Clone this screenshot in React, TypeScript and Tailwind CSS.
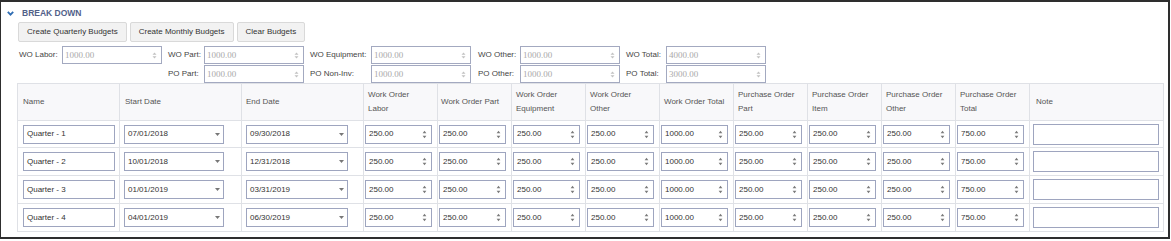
import React from "react";

const FilterSpin = () => (
  <svg width="5" height="7" viewBox="0 0 5 7" className="shrink-0">
    <path d="M0.5 2.8 L2.5 0.6 L4.5 2.8 Z" fill="#c2c2c2" />
    <path d="M0.5 4.2 L2.5 6.4 L4.5 4.2 Z" fill="#c2c2c2" />
  </svg>
);

const Spin = () => (
  <svg width="5" height="9" viewBox="0 0 5 9" className="shrink-0">
    <path d="M0.6 3.2 L2.5 0.8 L4.4 3.2 Z" fill="#7a7a7a" />
    <path d="M0.6 5.8 L2.5 8.2 L4.4 5.8 Z" fill="#7a7a7a" />
  </svg>
);

const Caret = () => (
  <svg width="5" height="3" viewBox="0 0 5 3" className="shrink-0">
    <path d="M0 0 L5 0 L2.5 3 Z" fill="#777" />
  </svg>
);

function FilterInput({ value }: { value: string }) {
  return (
    <div className="w-[100px] h-[18px] border border-[#a3a9c0] bg-white flex items-center pl-[2px] pr-[4px]">
      <span className="flex-1 text-[9px] text-[#a9a9a9] font-['Liberation_Serif',serif] leading-none">{value}</span>
      <FilterSpin />
    </div>
  );
}

function Label({ children, pl }: { children: React.ReactNode; pl: string }) {
  return <div className={`text-left ${pl} text-[8px] text-[#444] leading-[18px] whitespace-nowrap`}>{children}</div>;
}

function TextBox({ w, value, ml }: { w: string; value: string; ml: string }) {
  return (
    <div className={`${w} ${ml} h-[19px] border border-[#9ea5bf] bg-white flex items-center pl-[3px] text-[8px] text-[#333]`}>
      {value}
    </div>
  );
}

function DateBox({ value, w }: { value: string; w: string }) {
  return (
    <div className={`${w} ml-[4px] h-[19px] border border-[#9ea5bf] bg-white flex items-center pl-[3px] pr-[3px] text-[8px] text-[#333]`}>
      <span className="flex-1">{value}</span>
      <Caret />
    </div>
  );
}

function NumBox({ value }: { value: string }) {
  return (
    <div className="w-[67px] ml-[1px] h-[19px] border border-[#9ea5bf] bg-white flex items-center pl-[3px] pr-[4px] text-[8px] text-[#333]">
      <span className="flex-1">{value}</span>
      <Spin />
    </div>
  );
}

const headers: { t: React.ReactNode; pl: string }[] = [
  { t: "Name", pl: "pl-[5px]" },
  { t: "Start Date", pl: "pl-[5px]" },
  { t: "End Date", pl: "pl-[4px]" },
  { t: <>Work Order<br />Labor</>, pl: "pl-[4px]" },
  { t: "Work Order Part", pl: "pl-[3px]" },
  { t: <>Work Order<br />Equipment</>, pl: "pl-[4px]" },
  { t: <>Work Order<br />Other</>, pl: "pl-[4px]" },
  { t: "Work Order Total", pl: "pl-[4px]" },
  { t: <>Purchase Order<br />Part</>, pl: "pl-[4px]" },
  { t: <>Purchase Order<br />Item</>, pl: "pl-[4px]" },
  { t: <>Purchase Order<br />Other</>, pl: "pl-[4px]" },
  { t: <>Purchase Order<br />Total</>, pl: "pl-[4px]" },
  { t: "Note", pl: "pl-[6px]" },
];

const rows = [
  { name: "Quarter - 1", s: "07/01/2018", e: "09/30/2018", h: "h-[27px]" },
  { name: "Quarter - 2", s: "10/01/2018", e: "12/31/2018", h: "h-[28px]" },
  { name: "Quarter - 3", s: "01/01/2019", e: "03/31/2019", h: "h-[28px]" },
  { name: "Quarter - 4", s: "04/01/2019", e: "06/30/2019", h: "h-[28px]" },
];

export default function App() {
  return (
    <div className="w-[1171px] h-[241px] bg-white font-['Liberation_Sans',Arial,sans-serif]">
      <div className="w-[1170px] h-[239px] border-t-2 border-l border-r-2 border-b-2 border-[#2e2e2e] flex flex-col">
        <div className="h-[20px] pt-[3px] flex items-center">
          <svg width="7" height="5" viewBox="0 0 7 5" className="ml-[6px]">
            <path d="M0.8 0.8 L3.5 3.6 L6.2 0.8" stroke="#2f6db3" strokeWidth="1.8" fill="none" />
          </svg>
          <span className="ml-[8px] text-[8.5px] font-bold text-[#526189]">BREAK DOWN</span>
        </div>
        <div className="flex gap-[3px] ml-[17px] h-[20px]">
          {["Create Quarterly Budgets", "Create Monthly Budgets", "Clear Budgets"].map((b) => (
            <div key={b} className="h-[20px] px-[8px] flex items-center bg-[#f2f2f2] border border-[#d9d9d9] rounded-[2px] text-[8px] text-[#333]">
              {b}
            </div>
          ))}
        </div>
        <div className="mt-[4px] grid grid-cols-[61px_100px_42px_100px_67px_100px_49px_100px_46px_100px] gap-y-[1px]">
          <Label pl="pl-[18px]">WO Labor:</Label>
          <FilterInput value="1000.00" />
          <Label pl="pl-[6px]">WO Part:</Label>
          <FilterInput value="1000.00" />
          <Label pl="pl-[6px]">WO Equipment:</Label>
          <FilterInput value="1000.00" />
          <Label pl="pl-[7px]">WO Other:</Label>
          <FilterInput value="1000.00" />
          <Label pl="pl-[6px]">WO Total:</Label>
          <FilterInput value="4000.00" />
          <div />
          <div />
          <Label pl="pl-[6px]">PO Part:</Label>
          <FilterInput value="1000.00" />
          <Label pl="pl-[6px]">PO Non-Inv:</Label>
          <FilterInput value="1000.00" />
          <Label pl="pl-[7px]">PO Other:</Label>
          <FilterInput value="1000.00" />
          <Label pl="pl-[6px]">PO Total:</Label>
          <FilterInput value="3000.00" />
        </div>
        <table className="ml-[16px] w-[1146px] table-fixed border-collapse">
          <colgroup>
            <col className="w-[102px]" />
            <col className="w-[122px]" />
            <col className="w-[122px]" />
            {Array.from({ length: 9 }).map((_, i) => (
              <col key={i} className="w-[74px]" />
            ))}
            <col className="w-[134px]" />
          </colgroup>
          <thead>
            <tr className="h-[37px] bg-[#f8f8fa]">
              {headers.map((h, i) => (
                <th key={i} className={`border border-[#dfe1e6] ${h.pl} p-0 text-left align-middle font-normal text-[8px] leading-[14px] text-[#555]`}>
                  {h.t}
                </th>
              ))}
            </tr>
          </thead>
          <tbody>
            {rows.map((r) => (
              <tr key={r.name} className={r.h}>
                <td className="border border-[#dfe1e6] p-0 align-middle">
                  <TextBox w="w-[92px]" ml="ml-[5px]" value={r.name} />
                </td>
                <td className="border border-[#dfe1e6] p-0 align-middle">
                  <DateBox w="w-[100px]" value={r.s} />
                </td>
                <td className="border border-[#dfe1e6] p-0 align-middle">
                  <DateBox w="w-[102px]" value={r.e} />
                </td>
                {["250.00", "250.00", "250.00", "250.00", "1000.00", "250.00", "250.00", "250.00", "750.00"].map((v, i) => (
                  <td key={i} className="border border-[#dfe1e6] p-0 align-middle">
                    <NumBox value={v} />
                  </td>
                ))}
                <td className="border border-[#dfe1e6] p-0 align-middle">
                  <div className="ml-[3px] w-[126px] h-[21px] border border-[#9ea5bf] bg-white" />
                </td>
              </tr>
            ))}
          </tbody>
        </table>
      </div>
    </div>
  );
}
